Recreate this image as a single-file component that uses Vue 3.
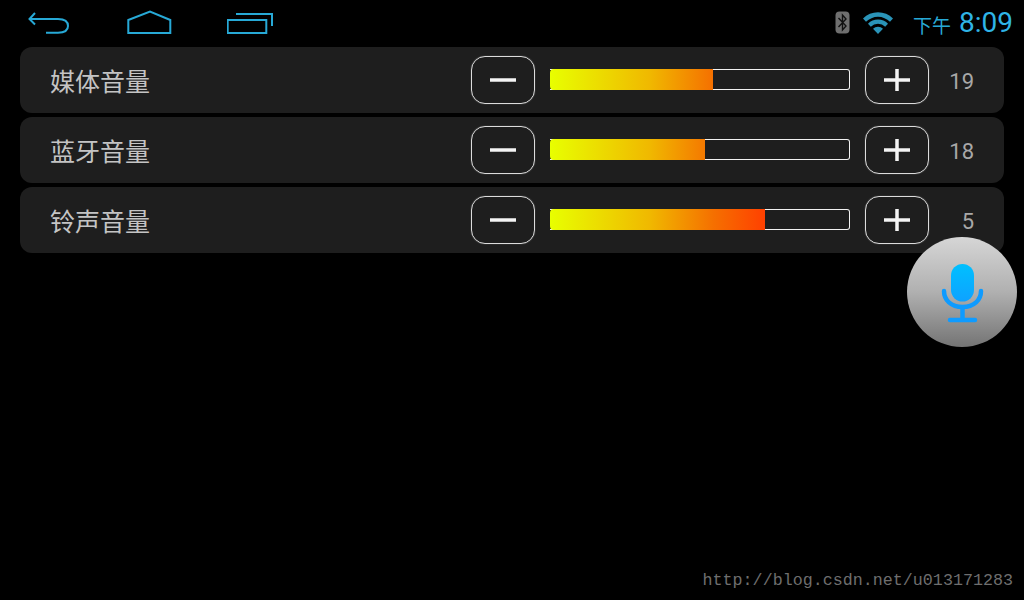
<script setup>
import { ref } from 'vue';

const rows = ref([
  { name: '媒体音量', fill: 163, value: 19 },
  { name: '蓝牙音量', fill: 155, value: 18 },
  { name: '铃声音量', fill: 215, value: 5 }
]);
</script>

<template>
  <div class="screen">
    <header class="status-bar">
      <nav class="nav-keys">
        <svg class="key" width="44" height="30" viewBox="0 0 44 30">
          <path d="M8 5 L2.500 11 L8 16.500 M2.500 11 H31 C37 11 41 13.500 41 18 C41 22.500 37 24.700 31 24.700 H19" />
        </svg>
        <svg class="key" width="46" height="30" viewBox="0 0 46 30">
          <path d="M2.300 25 V12 L24 3.500 L44.300 12 V25 Z" />
        </svg>
        <svg class="key" width="48" height="30" viewBox="0 0 48 30">
          <path d="M0.700 12 H39.300 V25 H0.700 Z M9 6 H45 V18" />
        </svg>
      </nav>
      <div class="tray">
        <svg class="bt" width="15" height="23" viewBox="0 0 15 23">
          <rect x="0.500" y="0.500" width="14" height="22" rx="4" fill="#6f6f6f" />
          <path d="M3.500 7 L11 15 L7.500 19 V4 L11 8 L3.500 16" fill="none" stroke="#111" stroke-width="1.400" />
        </svg>
        <svg class="wifi" width="30" height="24" viewBox="0 0 30 24">
          <path d="M0 7.500 A21 21 0 0 1 30 7.500 L27 10.800 A17 17 0 0 0 3 10.800 Z" />
          <path d="M5 12.700 A14 14 0 0 1 25 12.700 L22.200 15.700 A10 10 0 0 0 7.800 15.700 Z" />
          <path d="M10 17.800 A7 7 0 0 1 20 17.800 L15 23 Z" />
        </svg>
        <span class="ampm">下午</span>
        <span class="clock">8:09</span>
      </div>
    </header>

    <main class="list">
      <section v-for="row in rows" :key="row.name" class="row">
        <span class="name">{{ row.name }}</span>
        <button class="step">
          <svg width="28" height="28" viewBox="0 0 28 28"><path d="M1 14 H27" /></svg>
        </button>
        <div class="bar">
          <div class="bar-fill" :style="{ width: row.fill + 'px' }"></div>
        </div>
        <button class="step">
          <svg width="28" height="28" viewBox="0 0 28 28"><path d="M1 14 H27 M14 3 V25" /></svg>
        </button>
        <span class="value">{{ row.value }}</span>
      </section>
    </main>

    <div class="mic">
      <svg width="44" height="60" viewBox="0 0 44 60">
        <defs>
          <linearGradient id="capsule" x1="0" y1="0" x2="0" y2="1">
            <stop offset="0" stop-color="#00c0ff" />
            <stop offset="1" stop-color="#0ea2ff" />
          </linearGradient>
        </defs>
        <rect x="11" y="0" width="23" height="37.500" rx="11.500" fill="url(#capsule)" />
        <path d="M4 27 C4 36 11 43 22.500 43 C34 43 41 36 41 27" fill="none" stroke="#0f9bff" stroke-width="4.500" stroke-linecap="round" />
        <path d="M22.500 43 V54" fill="none" stroke="#0f9bff" stroke-width="4.500" />
        <path d="M10 56 H35" fill="none" stroke="#0f9bff" stroke-width="4.500" stroke-linecap="round" />
      </svg>
    </div>

    <div class="watermark">http://blog.csdn.net/u013171283</div>
  </div>
</template>

<style>
html, body {
  background: #000;
}
</style>

<style scoped>
.screen {
  position: relative;
  width: 1024px;
  height: 600px;
  overflow: hidden;
  background: #000;
  font-family: "Roboto", "Noto Sans CJK SC", sans-serif;
}

.status-bar {
  display: flex;
  align-items: center;
  justify-content: space-between;
  height: 47px;
  padding: 0 10px 0 27px;
  box-sizing: border-box;
}

.nav-keys {
  display: flex;
  align-items: center;
  gap: 55px;
}

.key {
  display: block;
  margin-top: -1px;
}

.key path {
  fill: none;
  stroke: #27a9d6;
  stroke-width: 2;
}

.tray {
  display: flex;
  align-items: center;
  margin-top: -2px;
}

.wifi {
  margin-left: 13px;
  fill: #2a94b8;
}

.ampm {
  margin-left: 20px;
  margin-top: 4px;
  font-family: "Noto Sans CJK SC", sans-serif;
  font-size: 19px;
  color: #27a9d6;
}

.clock {
  margin-left: 8px;
  margin-right: 1px;
  font-size: 28px;
  color: #2fb4e6;
}

.list {
  display: flex;
  flex-direction: column;
  gap: 4px;
  padding: 0 20px;
}

.row {
  display: flex;
  align-items: center;
  height: 66px;
  padding: 0 30px;
  background: #1e1e1e;
  border-radius: 12px;
}

.name {
  width: 421px;
  font-family: "Noto Sans CJK SC", sans-serif;
  font-size: 25px;
  color: #c4c4c4;
}

.step {
  display: flex;
  align-items: center;
  justify-content: center;
  width: 64px;
  height: 48px;
  padding: 0;
  box-sizing: border-box;
  background: transparent;
  border: 1px solid #dcdcdc;
  border-radius: 14px;
  box-shadow: 0 0 1px #8a8a8a;
}

.step svg path {
  fill: none;
  stroke: #f4f4f4;
  stroke-width: 3.500;
}

.bar {
  width: 300px;
  height: 21px;
  margin: 0 15px 1px;
  box-sizing: border-box;
  border: solid #f2f2f2;
  border-width: 1px 1px 1px 0;
  border-radius: 0 3px 3px 0;
}

.bar-fill {
  height: 21px;
  margin-top: -1px;
  border-radius: 4px 0 0 4px;
  background: linear-gradient(90deg, #e8ff00 0, #f0b800 100px, #f57000 163px, #ff4000 215px);
  background-size: 300px 100%;
  background-repeat: no-repeat;
}

.value {
  flex: 1;
  text-align: right;
  font-size: 22px;
  color: #a8a8a8;
  margin-top: 2px;
}

.mic {
  position: absolute;
  left: 907px;
  top: 237px;
  display: flex;
  align-items: flex-start;
  justify-content: center;
  width: 110px;
  height: 110px;
  padding-top: 27px;
  box-sizing: border-box;
  border-radius: 50%;
  background: linear-gradient(180deg, #d6d6d6 0%, #b0b0b0 50%, #747474 100%);
}

.watermark {
  position: absolute;
  right: 11px;
  bottom: 10px;
  font-family: "Liberation Mono", monospace;
  font-size: 16.700px;
  color: #6e6e6e;
}
</style>
